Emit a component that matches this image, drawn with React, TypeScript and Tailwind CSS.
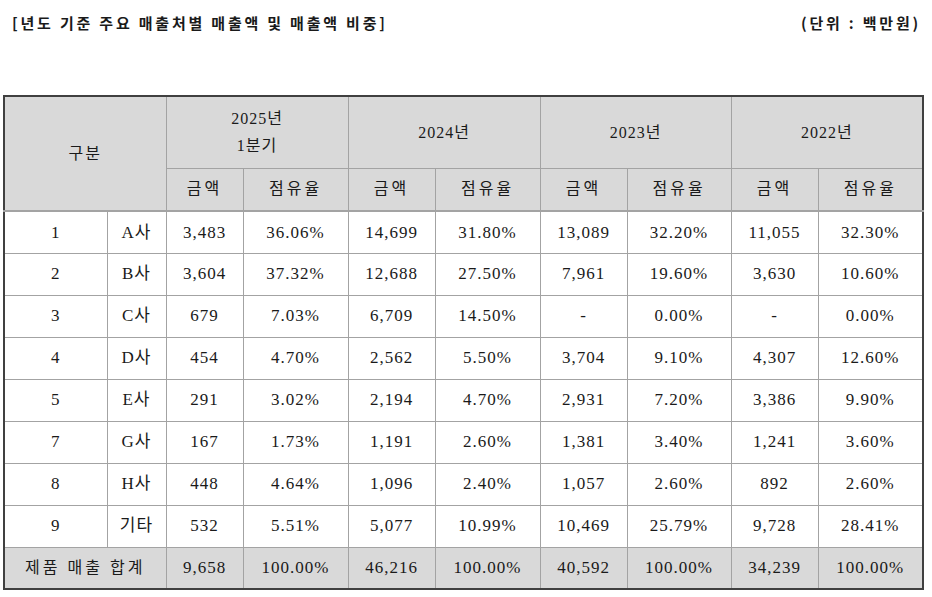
const font = "font-['Liberation_Serif','Noto_Sans_CJK_KR',serif]";

const years = [
  { label: ["2025년", "1분기"] },
  { label: ["2024년"] },
  { label: ["2023년"] },
  { label: ["2022년"] },
];

const rows = [
  ["1", "A사", "3,483", "36.06%", "14,699", "31.80%", "13,089", "32.20%", "11,055", "32.30%"],
  ["2", "B사", "3,604", "37.32%", "12,688", "27.50%", "7,961", "19.60%", "3,630", "10.60%"],
  ["3", "C사", "679", "7.03%", "6,709", "14.50%", "-", "0.00%", "-", "0.00%"],
  ["4", "D사", "454", "4.70%", "2,562", "5.50%", "3,704", "9.10%", "4,307", "12.60%"],
  ["5", "E사", "291", "3.02%", "2,194", "4.70%", "2,931", "7.20%", "3,386", "9.90%"],
  ["7", "G사", "167", "1.73%", "1,191", "2.60%", "1,381", "3.40%", "1,241", "3.60%"],
  ["8", "H사", "448", "4.64%", "1,096", "2.40%", "1,057", "2.60%", "892", "2.60%"],
  ["9", "기타", "532", "5.51%", "5,077", "10.99%", "10,469", "25.79%", "9,728", "28.41%"],
];

const total = ["9,658", "100.00%", "46,216", "100.00%", "40,592", "100.00%", "34,239", "100.00%"];

const widths = [103, 59, 77, 105, 87, 105, 87, 104, 87, 105];

const cell = "border border-[#a3a3a3] text-center align-middle p-0";
const subHead = `${cell} border-b-2 font-normal text-[16px] tracking-[3px]`;

export default function App() {
  return (
    <div className={`w-[932px] h-[597px] bg-white text-[#1a1a1a] ${font}`}>
      <div className="flex justify-between pt-[13px] pl-[12px] pr-[11px] text-[15px] leading-[20px] font-bold tracking-[2.8px] font-['Noto_Sans_CJK_KR',sans-serif]">
        <span>[년도 기준 주요 매출처별 매출액 및 매출액 비중]</span>
        <span>(단위 : 백만원)</span>
      </div>

      <table className="mt-[62px] ml-[3px] border-collapse border-2 border-[#404040] table-fixed w-[920px] text-[17px] tracking-[1px]">
        <colgroup>
          {widths.map((w, i) => (
            <col key={i} style={{ width: w }} />
          ))}
        </colgroup>
        <thead className="bg-[#d9d9d9]">
          <tr className="h-[72px]">
            <th rowSpan={2} colSpan={2} className={`${cell} border-b-2 font-normal text-[16px] tracking-[2px]`}>
              구분
            </th>
            {years.map((y) => (
              <th key={y.label[0]} colSpan={2} className={`${cell} font-normal leading-[27px] text-[16px]`}>
                {y.label.map((l) => (
                  <div key={l}>{l}</div>
                ))}
              </th>
            ))}
          </tr>
          <tr className="h-[43px]">
            {years.flatMap((y) => [
              <th key={y.label[0] + "-amt"} className={subHead}>
                금액
              </th>,
              <th key={y.label[0] + "-share"} className={subHead}>
                점유율
              </th>,
            ])}
          </tr>
        </thead>
        <tbody>
          {rows.map((r) => (
            <tr key={r[0]} className="h-[42px]">
              {r.map((v, i) => (
                <td key={i} className={cell}>
                  {v}
                </td>
              ))}
            </tr>
          ))}
          <tr className="h-[42px] bg-[#d9d9d9]">
            <td colSpan={2} className={`${cell} text-[16px] tracking-[3px]`}>
              제품 매출 합계
            </td>
            {total.map((v, i) => (
              <td key={i} className={cell}>
                {v}
              </td>
            ))}
          </tr>
        </tbody>
      </table>
    </div>
  );
}
